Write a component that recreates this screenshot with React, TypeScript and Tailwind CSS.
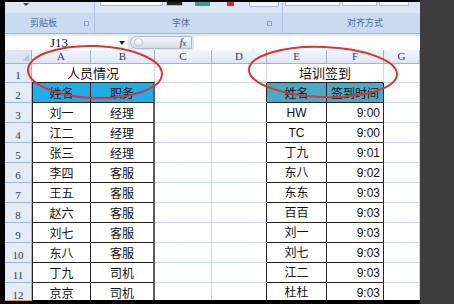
const leftRows = [
  ['刘一', '经理'],
  ['江二', '经理'],
  ['张三', '经理'],
  ['李四', '客服'],
  ['王五', '客服'],
  ['赵六', '客服'],
  ['刘七', '客服'],
  ['东八', '客服'],
  ['丁九', '司机'],
  ['京京', '司机'],
];

const rightRows = [
  ['HW', '9:00'],
  ['TC', '9:00'],
  ['丁九', '9:01'],
  ['东八', '9:02'],
  ['东东', '9:03'],
  ['百百', '9:03'],
  ['刘一', '9:03'],
  ['刘七', '9:03'],
  ['江二', '9:03'],
  ['杜杜', '9:03'],
];

const cols = ['A', 'B', 'C', 'D', 'E', 'F', 'G'];

const cjk = "font-['Noto_Sans_CJK_SC','Noto_Sans',sans-serif]";
const serif = "font-['Liberation_Serif','DejaVu_Serif',serif]";

function RowHead({ n }: { n: number }) {
  return (
    <div className="flex items-end justify-center border-r border-b border-[#9EB6CE] bg-[#E4ECF7] pb-0 text-[11px] leading-[13px] text-[#2b3f5f] font-['Liberation_Serif',serif]">
      {n}
    </div>
  );
}

function Ribbon() {
  return (
    <div className="flex h-[31px] bg-[#DAE6F4]">
      {/* 剪贴板 */}
      <div className="flex w-[90px] flex-col border-r border-r-[#AFC6E2]">
        <div className="flex h-[11px] items-start pl-[18px]">
          <div className="mt-[1px] h-0 w-0 border-x-[3px] border-t-[3px] border-x-transparent border-t-[#444]" />
        </div>
        <div className="flex h-[20px] items-center bg-[#C9DBF0]">
          <span className={`ml-[25px] text-[9px] text-[#4C6D9C] ${cjk}`}>剪贴板</span>
          <div className="ml-[27px] h-[5px] w-[5px] border border-[#8CA6C8]" />
        </div>
      </div>
      {/* 字体 */}
      <div className="flex w-[188px] flex-col border-r border-r-[#AFC6E2]">
        <div className="flex h-[11px] items-start gap-[3px] pl-[5px]">
          <div className="h-[4px] w-[63px] border border-t-0 border-[#A8BCD6] bg-white" />
          <div className="h-[4px] w-[17px] border border-t-0 border-[#A8BCD6] bg-[#222]" />
          <div className="ml-[9px] h-[4px] w-[15px] bg-[#3b9a9a]" />
          <div className="ml-[14px] h-[4px] w-[7px] bg-[#e02020]" />
          <div className="ml-[12px] h-[5px] w-[30px] border border-t-0 border-[#A8BCD6] bg-[#F2F6FB]" />
        </div>
        <div className="flex h-[20px] items-center bg-[#C9DBF0]">
          <span className={`ml-[77px] text-[9px] text-[#4C6D9C] ${cjk}`}>字体</span>
          <div className="ml-[77px] h-[5px] w-[5px] border border-[#8CA6C8]" />
        </div>
      </div>
      {/* 对齐方式 */}
      <div className="flex flex-1 flex-col">
        <div className="flex h-[11px] items-start gap-[2px] pl-[2px]">
          <div className="h-[4px] w-[55px] border border-t-0 border-[#A8BCD6] bg-[#F4F7FB]" />
          <div className="h-[4px] w-[35px] border border-t-0 border-[#A8BCD6] bg-[#F4F7FB]" />
          <div className="h-[4px] w-[30px] border border-t-0 border-[#A8BCD6] bg-[#F4F7FB]" />
        </div>
        <div className="flex h-[20px] items-center bg-[#C9DBF0]">
          <span className={`ml-[64px] text-[9px] text-[#4C6D9C] ${cjk}`}>对齐方式</span>
        </div>
      </div>
    </div>
  );
}

function FormulaBar() {
  return (
    <div className="flex h-[15px] items-center bg-[#DCE7F5]">
      <div className="flex h-[14px] w-[123px] items-center bg-white">
        <span className={`ml-[45px] text-[13px] leading-none text-[#111] ${serif}`}>J13</span>
        <div className="ml-auto mr-[3px] h-0 w-0 border-x-[3px] border-t-[4px] border-x-transparent border-t-[#222]" />
      </div>
      <div className="ml-[2px] flex h-[13px] w-[62px] items-center rounded-l-full border border-[#A9BCD5] bg-gradient-to-b from-[#F5F7FA] to-[#D3DBE6]">
        <div className="ml-[3px] h-[9px] w-[9px] rounded-full border border-[#C0CAD8] bg-gradient-to-b from-white to-[#D9E0EA]" />
        <span className="ml-auto mr-[5px] text-[10px] italic leading-none text-[#333] font-['Liberation_Serif',serif]">
          f<span className="text-[8px]">x</span>
        </span>
      </div>
      <div className="ml-[2px] h-[14px] flex-1 bg-white" />
    </div>
  );
}

function Sheet() {
  return (
    <div className="grid h-[250px] grid-cols-[27px_59px_64px_57px_55px_60px_57px_36px] grid-rows-[14px_19px_repeat(11,20px)] overflow-hidden bg-white">
      {/* column headers */}
      <div className="relative border-r border-b border-[#9EB6CE] bg-[#DCE6F3]">
        <div className="absolute right-[2px] bottom-[2px] h-0 w-0 border-b-[7px] border-l-[7px] border-b-[#B4C6DD] border-l-transparent" />
      </div>
      {cols.map((c) => (
        <div
          key={c}
          className={`flex items-center justify-center border-r border-b border-[#9EB6CE] bg-gradient-to-b from-[#F3F7FC] to-[#DDE7F4] text-[11px] leading-none text-[#2b3f5f] ${serif}`}
        >
          {c}
        </div>
      ))}

      {/* row 1 */}
      <RowHead n={1} />
      <div className={`col-span-2 flex items-center justify-center border-r border-b border-r-[#D0D7E5] border-b-[#222] text-[13px] text-[#111] ${cjk}`}>
        人员情况
      </div>
      <div className="border-r border-b border-[#D0D7E5]" />
      <div className="border-r border-b border-[#D0D7E5]" />
      <div className={`col-span-2 flex items-center justify-center border-r border-b border-r-[#D0D7E5] border-b-[#222] text-[13px] text-[#111] ${cjk}`}>
        培训签到
      </div>
      <div className="border-r border-b border-[#D0D7E5]" />

      {/* row 2 */}
      <RowHead n={2} />
      <div className={`flex items-center justify-center border-r border-b border-l border-[#222] bg-[#1DADE8] text-[12px] text-[#111] ${cjk}`}>
        姓名
      </div>
      <div className={`flex items-center justify-center border-r-2 border-b border-r-[#5e5e5e] border-b-[#222] bg-[#1DADE8] text-[12px] text-[#111] ${cjk}`}>
        职务
      </div>
      <div className="border-r border-b border-[#D0D7E5]" />
      <div className="border-r border-b border-r-[#222] border-b-[#D0D7E5]" />
      <div className={`flex items-center justify-center border-r border-b border-[#222] bg-[#4AAAC6] text-[12px] text-[#111] ${cjk}`}>
        姓名
      </div>
      <div className={`flex items-center justify-center border-r border-b border-[#222] bg-[#4AAAC6] text-[12px] text-[#111] ${cjk}`}>
        签到时间
      </div>
      <div className="border-r border-b border-[#D0D7E5]" />

      {/* rows 3-12 */}
      {leftRows.map((l, i) => (
        <div key={i} className="contents">
          <RowHead n={i + 3} />
          <div className={`flex items-center justify-center border-r border-b border-l border-[#222] text-[12px] text-[#111] ${cjk}`}>
            {l[0]}
          </div>
          <div className={`flex items-center justify-center border-r-2 border-b border-r-[#5e5e5e] border-b-[#222] text-[12px] text-[#111] ${cjk}`}>
            {l[1]}
          </div>
          <div className="border-r border-b border-[#D0D7E5]" />
          <div className="border-r border-b border-r-[#222] border-b-[#D0D7E5]" />
          <div className={`flex items-center justify-center border-r border-b border-[#222] text-[12px] text-[#111] font-['Liberation_Sans','Noto_Sans_CJK_SC',sans-serif]`}>
            {rightRows[i][0]}
          </div>
          <div className="flex items-center justify-end border-r border-b border-[#222] pr-[3px] text-[12px] text-[#111] font-['Liberation_Sans',sans-serif]">
            {rightRows[i][1]}
          </div>
          <div className="border-r border-b border-[#D0D7E5]" />
        </div>
      ))}
    </div>
  );
}

export default function App() {
  return (
    <div className="relative flex h-[304px] w-[454px] overflow-hidden bg-black">
      <div className="w-[5px] bg-black" />
      <div className="flex w-[415px] flex-col">
        <div className="h-[2px] bg-black" />
        <Ribbon />
        <div className="h-[1px] bg-[#9DB6D8]" />
        <div className="h-[1px] bg-[#E6EEF8]" />
        <FormulaBar />
        <Sheet />
        <div className="flex h-[4px] bg-black">
          <div className="h-[1px] w-[27px] bg-[#E59A3A]" />
        </div>
      </div>
      <div className="w-[34px] bg-[#3d3d3d]" />

      {/* red hand-drawn marks */}
      <svg className="pointer-events-none absolute inset-0" width="454" height="304" viewBox="0 0 454 304">
        <ellipse cx="95" cy="72" rx="67" ry="26" fill="none" stroke="#E0322E" strokeWidth="2" transform="rotate(2 95 72)" />
        <ellipse cx="323" cy="72" rx="74" ry="25" fill="none" stroke="#E0322E" strokeWidth="2" transform="rotate(2 323 72)" />
      </svg>
    </div>
  );
}
